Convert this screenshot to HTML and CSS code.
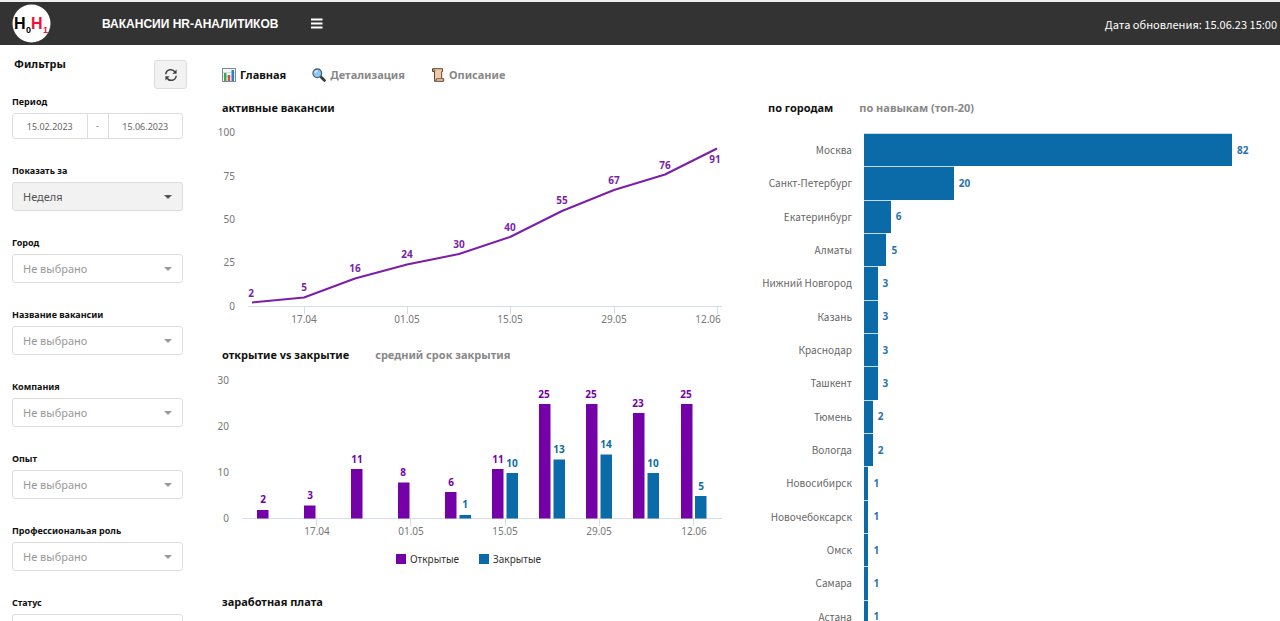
FILE: index.html
```html
<!DOCTYPE html>
<html lang="ru">
<head>
<meta charset="utf-8">
<title>Вакансии HR-аналитиков</title>
<link rel="stylesheet" href="styles.css">
</head>
<body>
<header class="topbar">
  <svg class="logo" width="40" height="40" viewBox="0 0 40 40" role="img" aria-label="H0H1">
    <circle cx="20.500" cy="19.500" r="19" fill="#fff"/>
    <text class="logo-big" x="3" y="25">H</text>
    <text class="logo-small" x="15" y="29">0</text>
    <text class="logo-big logo-red" x="20" y="25">H</text>
    <text class="logo-small logo-red" x="32" y="29">1</text>
  </svg>
  <h1 class="topbar-title">ВАКАНСИИ HR-АНАЛИТИКОВ</h1>
  <button class="menu-button" type="button" aria-label="Меню">
    <svg width="12" height="12" viewBox="0 0 12 12"><path d="M0 1.500h11.500M0 5.500h11.500M0 9.500h11.500" stroke="#fff" stroke-width="1.800"/></svg>
  </button>
  <p class="updated">Дата обновления: 15.06.23 15:00</p>
</header>

<div class="layout">
  <aside class="sidebar">
    <div class="sidebar-head">
      <h2 class="sidebar-title">Фильтры</h2>
      <button class="refresh" type="button" aria-label="Обновить">
        <svg width="14" height="14" viewBox="0 0 14 14" fill="none" stroke="#444" stroke-width="1.500">
          <path d="M1.800 6.300A5 5 0 0 1 11 4M12.200 7.700A5 5 0 0 1 3 10"/>
          <path d="M12.600 1.500v4.200H8.400zM1.400 12.500V8.300h4.200z" fill="#444" stroke="none"/>
        </svg>
      </button>
    </div>
    <div class="field">
      <label class="label" for="from">Период</label>
      <div class="range">
        <input class="date" id="from" type="text" value="15.02.2023">
        <span class="dash">-</span>
        <input class="date" type="text" value="15.06.2023" aria-label="Период, конец">
      </div>
    </div>
    <div class="field">
      <label class="label" for="step">Показать за</label>
      <div class="select-wrap filled"><select class="select" id="step"><option>Неделя</option></select></div>
    </div>
    <div class="field">
      <label class="label" for="city">Город</label>
      <div class="select-wrap"><select class="select" id="city"><option>Не выбрано</option></select></div>
    </div>
    <div class="field">
      <label class="label" for="vacancy">Название вакансии</label>
      <div class="select-wrap"><select class="select" id="vacancy"><option>Не выбрано</option></select></div>
    </div>
    <div class="field">
      <label class="label" for="company">Компания</label>
      <div class="select-wrap"><select class="select" id="company"><option>Не выбрано</option></select></div>
    </div>
    <div class="field">
      <label class="label" for="exp">Опыт</label>
      <div class="select-wrap"><select class="select" id="exp"><option>Не выбрано</option></select></div>
    </div>
    <div class="field">
      <label class="label" for="role">Профессиональая роль</label>
      <div class="select-wrap"><select class="select" id="role"><option>Не выбрано</option></select></div>
    </div>
    <div class="field">
      <label class="label" for="status">Статус</label>
      <div class="select-wrap"><select class="select" id="status"><option>Не выбрано</option></select></div>
    </div>
  </aside>

  <main class="main">
    <nav class="tabs page-tabs">
      <button class="tab active" type="button">
        <svg width="14" height="14" viewBox="0 0 14 14"><rect x=".5" y=".5" width="13" height="13" fill="#f4f8fb" stroke="#7b8a96"/><path d="M1 4.500h12M1 8.500h12" stroke="#cbd8e0"/><path d="M2 5h2.500v8H2z" fill="#2fae4a"/><path d="M5.700 7h2.500v6H5.700z" fill="#e2483d"/><path d="M9.500 2H12v11H9.500z" fill="#2b7fd0"/></svg>
        Главная
      </button>
      <button class="tab" type="button">
        <svg width="14" height="14" viewBox="0 0 14 14"><path d="M8.500 8.500l4 4" stroke="#333b42" stroke-width="2.600" stroke-linecap="round"/><circle cx="5.300" cy="5.300" r="4.300" fill="#8fc9f2" stroke="#4a6478" stroke-width="1.300"/><path d="M3 5a2.500 2.500 0 0 1 2.500-2.300" fill="none" stroke="#e4f4ff" stroke-width="1.100"/></svg>
        Детализация
      </button>
      <button class="tab" type="button">
        <svg width="14" height="14" viewBox="0 0 14 14"><path d="M1.500.700h10v2.800h-.8v7.200h2v2.600H3.500v-2.100V3.500h-2z" fill="#f0c8a8" stroke="#5d4435" stroke-linejoin="round"/><path d="M1.800 2h2v1.500M4 12.200h1.500v-1.500h5" fill="none" stroke="#5d4435" stroke-width=".8"/></svg>
        Описание
      </button>
    </nav>

    <div class="columns">
      <div class="column">
        <section>
          <div class="tabs"><h3 class="tab active">активные вакансии</h3></div>
          <svg class="chart" viewBox="0 0 512 212" role="img" aria-label="Активные вакансии">
            <g class="axis-text" text-anchor="end">
              <text x="19" y="18">100</text><text x="19" y="62">75</text><text x="19" y="105">50</text><text x="19" y="148">25</text><text x="19" y="192">0</text>
            </g>
            <path class="axis" d="M32 188.500H506M88.500 188v8M191.500 188v8M294.500 188v8M398.500 188v8M501.500 188v8"/>
            <g class="axis-text" text-anchor="middle">
              <text x="88" y="205">17.04</text><text x="191" y="205">01.05</text><text x="294" y="205">15.05</text><text x="398" y="205">29.05</text><text x="492" y="205">12.06</text>
            </g>
            <polyline class="line" points="36,184.500 88,179.500 139,160.500 191,146.500 243,136 294,119 346,93 398,72 449,56.500 501,30.500"/>
            <g class="value-text line-value" text-anchor="middle">
              <text x="35" y="179">2</text><text x="88" y="173">5</text><text x="139" y="154">16</text><text x="191" y="140">24</text><text x="243" y="130">30</text><text x="294" y="113">40</text><text x="346" y="86">55</text><text x="398" y="66">67</text><text x="449" y="51">76</text><text x="499" y="45">91</text>
            </g>
          </svg>
        </section>

        <section>
          <div class="tabs">
            <button class="tab active" type="button">открытие vs закрытие</button>
            <button class="tab" type="button">средний срок закрытия</button>
          </div>
          <svg class="chart" viewBox="0 0 512 212" role="img" aria-label="Открытие и закрытие вакансий">
            <g class="axis-text" text-anchor="end">
              <text x="13" y="19">30</text><text x="13" y="65">20</text><text x="13" y="111">10</text><text x="13" y="157">0</text>
            </g>
            <path class="axis" d="M26 153.500H506M100.500 153v8M194.500 153v8M289.500 153v8M383.500 153v8M477.500 153v8"/>
            <g class="axis-text" text-anchor="middle">
              <text x="101" y="170">17.04</text><text x="195" y="170">01.05</text><text x="289" y="170">15.05</text><text x="383" y="170">29.05</text><text x="478" y="170">12.06</text>
            </g>
            <path class="purple" d="M41 145h11.500v8.500H41zM88 140.500h11.500v13H88zM135 104h11.500v49.500H135zM182 117.500h11.500v36H182zM229 127h11.500v26.500H229zM276 104h11.500v49.500H276zM323 39h11.500v114.500H323zM370 39h11.500v114.500H370zM417 48h11.500v105.500H417zM465 39h11.500v114.500H465z"/>
            <path class="blue" d="M243.500 150H255v3.500h-11.500zM290.500 108H302v45.500h-11.500zM337.500 94.500H349v59h-11.500zM384.500 89.500H396v64h-11.500zM431.500 108H443v45.500h-11.500zM479 131h11.500v22.500H479z"/>
            <g class="value-text purple" text-anchor="middle">
              <text x="47" y="138">2</text><text x="94" y="134">3</text><text x="141" y="98">11</text><text x="187" y="111">8</text><text x="235" y="121">6</text><text x="282" y="98">11</text><text x="328" y="33">25</text><text x="375" y="33">25</text><text x="422" y="42">23</text><text x="470" y="33">25</text>
            </g>
            <g class="value-text blue" text-anchor="middle">
              <text x="249" y="143">1</text><text x="296" y="102">10</text><text x="343" y="88">13</text><text x="390" y="83">14</text><text x="437" y="102">10</text><text x="485" y="125">5</text>
            </g>
            <path class="purple" d="M180 189h10v10h-10z"/>
            <text class="legend" x="194" y="198">Открытые</text>
            <path class="blue" d="M263 189h10v10h-10z"/>
            <text class="legend" x="277" y="198">Закрытые</text>
          </svg>
        </section>

        <section>
          <div class="tabs"><h3 class="tab active">заработная плата</h3></div>
        </section>
      </div>

      <section class="column">
        <div class="tabs">
          <button class="tab active" type="button">по городам</button>
          <button class="tab" type="button">по навыкам (топ-20)</button>
        </div>
        <ul class="bars">
          <li class="bar-row"><span class="city">Москва</span><span class="track"><span class="bar" style="width:100%"></span><b class="num">82</b></span></li>
          <li class="bar-row"><span class="city">Санкт-Петербург</span><span class="track"><span class="bar" style="width:24.4%"></span><b class="num">20</b></span></li>
          <li class="bar-row"><span class="city">Екатеринбург</span><span class="track"><span class="bar" style="width:7.3%"></span><b class="num">6</b></span></li>
          <li class="bar-row"><span class="city">Алматы</span><span class="track"><span class="bar" style="width:6.1%"></span><b class="num">5</b></span></li>
          <li class="bar-row"><span class="city">Нижний Новгород</span><span class="track"><span class="bar" style="width:3.7%"></span><b class="num">3</b></span></li>
          <li class="bar-row"><span class="city">Казань</span><span class="track"><span class="bar" style="width:3.7%"></span><b class="num">3</b></span></li>
          <li class="bar-row"><span class="city">Краснодар</span><span class="track"><span class="bar" style="width:3.7%"></span><b class="num">3</b></span></li>
          <li class="bar-row"><span class="city">Ташкент</span><span class="track"><span class="bar" style="width:3.7%"></span><b class="num">3</b></span></li>
          <li class="bar-row"><span class="city">Тюмень</span><span class="track"><span class="bar" style="width:2.4%"></span><b class="num">2</b></span></li>
          <li class="bar-row"><span class="city">Вологда</span><span class="track"><span class="bar" style="width:2.4%"></span><b class="num">2</b></span></li>
          <li class="bar-row"><span class="city">Новосибирск</span><span class="track"><span class="bar" style="width:1.2%"></span><b class="num">1</b></span></li>
          <li class="bar-row"><span class="city">Новочебоксарск</span><span class="track"><span class="bar" style="width:1.2%"></span><b class="num">1</b></span></li>
          <li class="bar-row"><span class="city">Омск</span><span class="track"><span class="bar" style="width:1.2%"></span><b class="num">1</b></span></li>
          <li class="bar-row"><span class="city">Самара</span><span class="track"><span class="bar" style="width:1.2%"></span><b class="num">1</b></span></li>
          <li class="bar-row"><span class="city">Астана</span><span class="track"><span class="bar" style="width:1.2%"></span><b class="num">1</b></span></li>
        </ul>
      </section>
    </div>
  </main>
</div>
</body>
</html>
```
FILE: styles.css
```css
* { box-sizing: border-box; }
body {
  margin: 0;
  height: 100vh;
  overflow: hidden;
  background: #fff;
  color: #111;
  font-family: "Noto Sans", "Open Sans", sans-serif;
  font-size: 11px;
}
h1, h2, h3, p, ul { margin: 0; padding: 0; }
button, input, select { font: inherit; margin: 0; }
button { border: 0; background: none; padding: 0; color: inherit; }
svg { display: block; }

.topbar {
  display: flex;
  align-items: center;
  height: 45px;
  padding: 0 3px 0 11px;
  border-top: 2px solid #eef0f0;
  background: #333;
  color: #fff;
}
.logo { flex: none; }
.logo-big { font: bold 16px "Liberation Sans", sans-serif; }
.logo-small { font: bold 9px "Liberation Sans", sans-serif; }
.logo-red { fill: #ee1038; }
.topbar-title {
  margin-left: 51px;
  font: bold 12px "Liberation Sans", sans-serif;
}
.menu-button { margin-left: 33px; }
.updated {
  margin-left: auto;
  font-family: "Noto Sans CJK SC", "Noto Sans", sans-serif;
}

.layout {
  display: grid;
  grid-template-columns: 216px 1fr;
}
.sidebar {
  display: flex;
  flex-direction: column;
  gap: 24px;
  padding: 15px 33px 0 12px;
}
.sidebar-head {
  display: flex;
  justify-content: space-between;
  height: 10px;
  margin-right: -4px;
}
.sidebar-title {
  padding-left: 2px;
  font-size: 11px;
  line-height: 8px;
}
.refresh {
  display: grid;
  place-items: center;
  width: 33px;
  height: 29px;
  border: 1px solid #ddd;
  border-radius: 3px;
  background: #f2f2f2;
}
.field { display: flex; flex-direction: column; gap: 3px; }
.label { font-size: 9px; font-weight: bold; line-height: 16px; }
.range {
  display: flex;
  height: 26px;
  border: 1px solid #ddd;
  border-radius: 3px;
}
.date {
  flex: 1;
  min-width: 0;
  padding: 0;
  border: 0;
  background: none;
  color: #666;
  font-size: 9px;
  text-align: center;
}
.dash {
  width: 22px;
  border: solid #ddd;
  border-width: 0 1px;
  color: #777;
  font-size: 9px;
  line-height: 24px;
  text-align: center;
}
.select-wrap {
  position: relative;
  height: 29px;
  border: 1px solid #ddd;
  border-radius: 3px;
  color: #999;
}
.filled { background: #f2f2f2; color: #555; }
.select {
  appearance: none;
  width: 100%;
  height: 100%;
  padding: 0 24px 0 10px;
  border: 0;
  background: none;
  color: inherit;
}
.select-wrap::after {
  content: "";
  position: absolute;
  right: 10px;
  top: 12px;
  border: 4px solid transparent;
  border-top-color: currentColor;
  border-bottom: 0;
  pointer-events: none;
}

.main { min-width: 0; padding-top: 20px; }
.tabs { display: flex; gap: 26px; padding-left: 6px; }
.tab {
  display: flex;
  align-items: center;
  gap: 4px;
  color: #888;
  font-size: 11px;
  font-weight: bold;
  line-height: 20px;
  white-space: nowrap;
}
.active { color: #111; }
.page-tabs { margin-bottom: 13px; }
.columns {
  display: grid;
  grid-template-columns: 512fr 518fr;
  gap: 34px;
}
.column { min-width: 0; }
.column section + section { margin-top: 15px; }
.chart { width: 100%; height: auto; }
.axis { fill: none; stroke: #d5dcea; }
.axis-text { fill: #777; font-size: 10px; }
.line { fill: none; stroke: #7b1fa8; stroke-width: 2; stroke-linejoin: round; }
.value-text { font-size: 10px; font-weight: bold; }
.line-value { fill: #7b1fa8; }
.legend { fill: #333; font-size: 10px; }
.purple { fill: #7400a8; }
.blue { fill: #0a6ba8; }

.bars {
  display: grid;
  grid-auto-rows: 1fr;
  height: 500px;
  margin-top: 15px;
  padding-right: 48px;
  list-style: none;
}
.bar-row { display: grid; grid-template-columns: 90px 1fr; gap: 12px; }
.city {
  align-self: center;
  justify-self: end;
  color: #666;
  font-family: "Noto Sans CJK SC", "Noto Sans", sans-serif;
  font-size: 10px;
  white-space: nowrap;
}
.track { display: flex; align-items: center; min-width: 0; }
.bar {
  flex: none;
  height: 100%;
  border-top: 1px solid #c6ddec;
  background: #0a6ba8;
}
.num { margin-left: 5px; color: #2a72aa; font-size: 10px; }
```
